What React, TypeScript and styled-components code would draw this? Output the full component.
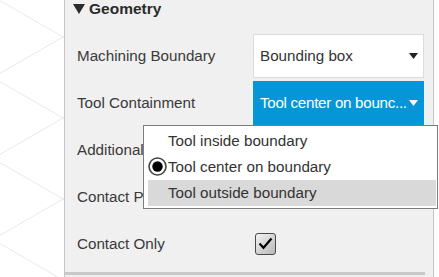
import styled, { createGlobalStyle } from 'styled-components'

const GlobalStyle = createGlobalStyle`
  html, body {
    margin: 0;
    padding: 0;
    background: #ffffff;
  }
  body {
    font-family: "Liberation Sans", Arial, sans-serif;
    color: #333333;
  }
`

const options = [
  'Tool inside boundary',
  'Tool center on boundary',
  'Tool outside boundary'
]

const Grid = () => {
  const lines = []
  for (let k = -2; k < 5; k++) {
    const y0 = 37 + 81 * k
    lines.push(
      <line key={'d' + k} x1={0} y1={y0 - 0.577 * 63} x2={64} y2={y0 + 0.577} />,
      <line key={'a' + k} x1={0} y1={y0 + 0.577 * 63} x2={64} y2={y0 - 0.577} />
    )
  }
  return (
    <StyledGridSvg width="64" height="277" viewBox="0 0 64 277">
      <g stroke="#e9e9e9" strokeWidth="1">{lines}</g>
    </StyledGridSvg>
  )
}

const Caret = ({ color }: { color: string }) => (
  <svg width="9" height="6" viewBox="0 0 9 6">
    <polygon points="0,0 9,0 4.5,6" fill={color} />
  </svg>
)

const Radio = () => (
  <svg width="19" height="19" viewBox="0 0 19 19">
    <circle cx="9.5" cy="9.5" r="8.5" fill="#fff" stroke="#444" strokeWidth="1.6" />
    <circle cx="9.5" cy="9.5" r="5.2" fill="#000" />
  </svg>
)

const App = () => {
  return (
    <>
      <GlobalStyle />
      <StyledLayout>
        <StyledViewport>
          <Grid />
        </StyledViewport>
        <StyledPanel>
          <StyledHeader>
            <svg width="12" height="10" viewBox="0 0 12 10">
              <polygon points="0,0 12,0 6,10" fill="#2b2b2b" />
            </svg>
            <span>Geometry</span>
          </StyledHeader>

          <StyledRow>
            <StyledLabel>Machining Boundary</StyledLabel>
            <StyledSelect>
              <StyledSelectText>Bounding box</StyledSelectText>
              <Caret color="#222" />
            </StyledSelect>
          </StyledRow>

          <StyledRow>
            <StyledLabel>Tool Containment</StyledLabel>
            <StyledSelectWrap>
              <StyledSelect $active>
                <StyledSelectText $tight>Tool center on bounc...</StyledSelectText>
                <Caret color="#fff" />
              </StyledSelect>
              <StyledPopup>
                {options.map((o, i) => (
                  <StyledOption key={o} $hover={i === 2}>
                    <StyledRadioSlot>{i === 1 && <Radio />}</StyledRadioSlot>
                    {o}
                  </StyledOption>
                ))}
              </StyledPopup>
            </StyledSelectWrap>
          </StyledRow>

          <StyledRow>
            <StyledLabel>Additional Offset</StyledLabel>
          </StyledRow>

          <StyledRow>
            <StyledLabel>Contact Point Boundary</StyledLabel>
          </StyledRow>

          <StyledRow>
            <StyledLabel>Contact Only</StyledLabel>
            <StyledCheckbox>
              <svg width="15" height="13" viewBox="0 0 15 13">
                <path d="M1.5 6.5 L5.5 10.8 L13.5 1.5" fill="none" stroke="#000" strokeWidth="2.2" />
              </svg>
            </StyledCheckbox>
          </StyledRow>

          <StyledFooterBar />
        </StyledPanel>
        <StyledRightGap />
      </StyledLayout>
    </>
  )
}

export default App

const StyledLayout = styled.div`
  display: flex;
  width: 439px;
  height: 277px;
  overflow: hidden;
`

const StyledViewport = styled.div`
  width: 64px;
  flex: none;
  background: #ffffff;
`

const StyledGridSvg = styled.svg`
  display: block;
`

const StyledPanel = styled.div`
  width: 368px;
  flex: none;
  background: #f0f0f0;
  border-left: 1px solid #c6c6c6;
  border-right: 1px solid #c6c6c6;
  display: flex;
  flex-direction: column;
`

const StyledHeader = styled.div`
  height: 32px;
  display: flex;
  align-items: flex-start;
  gap: 4px;
  padding-left: 8px;
  font-size: 15.5px;
  font-weight: bold;
  color: #2b2b2b;
  line-height: 18px;

  svg {
    margin-top: 4px;
  }
`

const StyledRow = styled.div`
  height: 47px;
  display: grid;
  grid-template-columns: 176px 171px;
  align-items: center;
  padding-left: 12px;
`

const StyledLabel = styled.div`
  font-size: 15.2px;
  color: #3a3a3a;
  white-space: nowrap;
  overflow: hidden;
`

const StyledSelectWrap = styled.div`
  position: relative;
`

const StyledSelect = styled.div<{ $active?: boolean }>`
  height: 44px;
  box-sizing: border-box;
  display: flex;
  align-items: center;
  justify-content: space-between;
  gap: 1px;
  padding: 0 5px 0 6px;
  background: ${p => (p.$active ? '#0696d7' : '#ffffff')};
  border: 1px solid ${p => (p.$active ? '#0696d7' : '#dcdcdc')};
  color: ${p => (p.$active ? '#ffffff' : '#333333')};
  font-size: 15.2px;

  svg {
    flex: none;
  }
`

const StyledSelectText = styled.span<{ $tight?: boolean }>`
  white-space: nowrap;
  overflow: hidden;
  letter-spacing: ${p => (p.$tight ? '-0.3px' : 'normal')};
`

const StyledPopup = styled.div`
  position: absolute;
  top: 44px;
  left: -110px;
  width: 295px;
  box-sizing: border-box;
  background: #ffffff;
  border: 1px solid #7d7d7d;
  padding: 2px 1px 2px 4px;
  z-index: 2;
`

const StyledOption = styled.div<{ $hover?: boolean }>`
  height: 26px;
  display: flex;
  align-items: center;
  font-size: 15.2px;
  color: #333333;
  background: ${p => (p.$hover ? '#d9d9d9' : 'transparent')};
`

const StyledRadioSlot = styled.span`
  width: 20px;
  height: 19px;
  display: flex;
  align-items: center;
`

const StyledCheckbox = styled.div`
  width: 21px;
  height: 22px;
  margin-left: 2px;
  box-sizing: border-box;
  border: 1.5px solid #4a4a4a;
  border-radius: 3px;
  background: linear-gradient(135deg, #f4f4f4 0%, #b8b8b8 100%);
  display: flex;
  align-items: center;
  justify-content: center;
`

const StyledFooterBar = styled.div`
  margin-top: 5px;
  width: 360px;
  height: 3px;
  background: #c9c9c9;
`

const StyledRightGap = styled.div`
  flex: 1;
  background: #ffffff;
`
